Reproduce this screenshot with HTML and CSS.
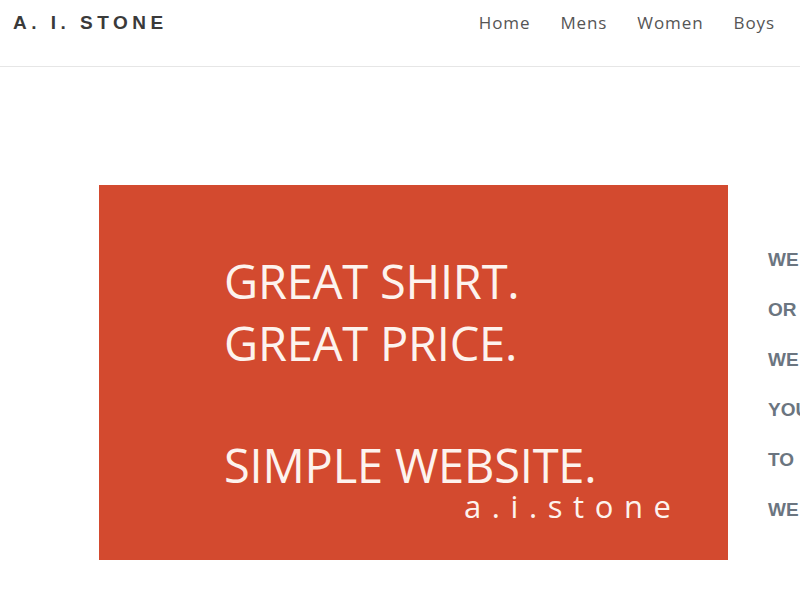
FILE: index.html
```html
<!DOCTYPE html>
<html>
<head>
    <meta charset="utf-8">
    <meta name="viewport" content="width=device-width">
    <title>A. I. Stone</title>
    <link rel="stylesheet" href="styles.css">
</head>
<body>
    <header class="site-header">
        <div class="logo">A. I. STONE</div>
        <nav class="main-nav">
            <a href="#">Home</a>
            <a href="#">Mens</a>
            <a href="#">Women</a>
            <a href="#">Boys</a>
        </nav>
    </header>

    <main class="intro">
        <div class="banner">
            <p class="banner-line">GREAT SHIRT.</p>
            <p class="banner-line">GREAT PRICE.</p>
            <p class="banner-line banner-gap">SIMPLE WEBSITE.</p>
            <p class="banner-sign">a.i.stone</p>
        </div>
        <div class="about">
            <p>WE</p>
            <p>OR</p>
            <p>WE</p>
            <p>YOU</p>
            <p>TO</p>
            <p>WE</p>
        </div>
    </main>
</body>
</html>
```

FILE: styles.css
```css
body {
    margin: 0;
    padding: 0;
    background-color: #fff;
    font-family: "Open Sans", Arial, sans-serif;
    overflow-x: hidden;
}

.site-header {
    display: flex;
    align-items: center;
    height: 67px;
    border-bottom: 1px solid #e6e6e6;
    box-sizing: border-box;
    padding-left: 13px;
}

.logo {
    font-family: "Liberation Sans", Arial, sans-serif;
    font-weight: bold;
    font-size: 19px;
    letter-spacing: 4.5px;
    color: #3a3a3a;
    margin-top: -20px;
}

.main-nav {
    display: flex;
    gap: 30px;
    margin-left: 311px;
    margin-top: -21px;
}

.main-nav a {
    color: #555;
    text-decoration: none;
    font-size: 17px;
    letter-spacing: 0.9px;
}

.intro {
    display: flex;
    padding-top: 118px;
    padding-left: 99px;
}

.banner {
    width: 629px;
    height: 375px;
    flex-shrink: 0;
    background-color: #d34a2f;
    box-sizing: border-box;
    padding: 65px 0 0 125px;
    color: #fdf3ee;
}

.banner p {
    margin: 0;
}

.banner-line {
    font-family: "Open Sans", sans-serif;
    font-size: 47px;
    line-height: 62px;
    letter-spacing: -0.2px;
}

.banner-gap {
    line-height: 48px;
    margin-top: 67px !important;
}

.banner-sign {
    font-size: 31px;
    letter-spacing: 10.6px;
    line-height: 32px;
    padding-left: 240px;
    margin-top: 1px !important;
}

.about {
    padding-left: 40px;
    padding-top: 50px;
}

.about p {
    margin: 0;
    font-family: "Liberation Sans", Arial, sans-serif;
    font-weight: bold;
    font-size: 19px;
    line-height: 50px;
    color: #6b7580;
    white-space: nowrap;
}
```
